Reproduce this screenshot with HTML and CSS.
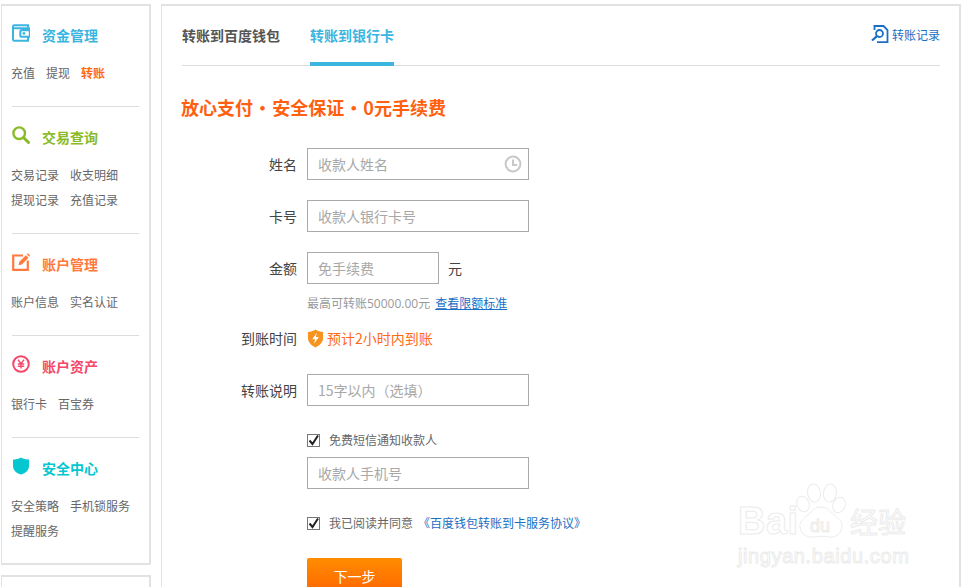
FILE: index.html
```html
<!DOCTYPE html>
<html lang="zh-CN">
<head>
<meta charset="utf-8">
<title>转账到银行卡</title>
<link rel="stylesheet" href="styles.css">
</head>
<body>
<div class="page">
  <aside class="side">
    <div class="side-box">
      <section class="sec sec-first">
        <h3 class="sec-title c-blue">
          <svg class="sec-ico" viewBox="0 0 18 18"><path d="M16 3.500V1.200H2.200A1.200 1.200 0 0 0 1 2.400v13.200c0 .7.5 1.200 1.200 1.200H16v-4" fill="none" stroke="#3bb5e0" stroke-width="2"/><path d="M1 4.200h16.800v8.600H9.500a1.200 1.200 0 0 1-1.200-1.200V7.400c0-.7.5-1.200 1.200-1.200h8.300" fill="none" stroke="#3bb5e0" stroke-width="2"/><rect x="10.600" y="8.200" width="2.600" height="2.400" fill="#3bb5e0"/></svg>
          资金管理</h3>
        <div class="links"><a>充值</a><a>提现</a><a class="on">转账</a></div>
      </section>
      <section class="sec sec-two">
        <h3 class="sec-title c-green">
          <svg class="sec-ico" viewBox="0 0 18 18"><circle cx="7.200" cy="7.200" r="5.800" fill="none" stroke="#8abb2a" stroke-width="2.400"/><path d="M11.500 11.500l5 5" stroke="#8abb2a" stroke-width="3" stroke-linecap="round"/></svg>
          交易查询</h3>
        <div class="links"><a>交易记录</a><a>收支明细</a><a>提现记录</a><a>充值记录</a></div>
      </section>
      <section class="sec">
        <h3 class="sec-title c-orange">
          <svg class="sec-ico" viewBox="0 0 18 18"><path d="M11 2.500H1.200v14.300h14.600V7.500" fill="none" stroke="#ff7a3c" stroke-width="2.200"/><path d="M6.500 12.200l.8-3.400 6.600-6.600 2.600 2.600-6.600 6.600z" fill="#ff7a3c"/><path d="M14.800 1.300l1.100-1 2.300 2.300-1 1.200z" fill="#ff7a3c"/></svg>
          账户管理</h3>
        <div class="links"><a>账户信息</a><a>实名认证</a></div>
      </section>
      <section class="sec">
        <h3 class="sec-title c-red">
          <svg class="sec-ico" viewBox="0 0 18 18"><circle cx="9" cy="9" r="7.800" fill="none" stroke="#f4486a" stroke-width="2"/><path d="M6 4.800L9 8.600l3-3.800M5.800 9h6.400M5.800 11.200h6.400M9 8.600v5" fill="none" stroke="#f4486a" stroke-width="1.400"/></svg>
          账户资产</h3>
        <div class="links"><a>银行卡</a><a>百宝券</a></div>
      </section>
      <section class="sec sec-last">
        <h3 class="sec-title c-teal">
          <svg class="sec-ico" viewBox="0 0 18 18"><path d="M1 2.600C3.600 2.600 6.500 1.800 9 .4c2.500 1.400 5.400 2.200 8 2.200v6.600c0 4-3.600 7-8 8.400-4.400-1.400-8-4.400-8-8.400z" fill="#06c6cf"/></svg>
          安全中心</h3>
        <div class="links"><a>安全策略</a><a>手机锁服务</a><a>提醒服务</a></div>
      </section>
    </div>
    <div class="side-box side-next"></div>
  </aside>

  <main class="main">
    <header class="tabs">
      <a class="tab">转账到百度钱包</a>
      <a class="tab tab-on">转账到银行卡</a>
      <a class="record">
        <svg class="record-ico" viewBox="0 0 18 18"><path d="M3.500 5V1h9l4 4v12.200H6" fill="none" stroke="#1a6fc4" stroke-width="1.800"/><circle cx="8.500" cy="8.500" r="3.500" fill="none" stroke="#1a6fc4" stroke-width="1.800"/><path d="M6 11.200l-5 4.300" stroke="#1a6fc4" stroke-width="2.200"/></svg>
        转账记录</a>
    </header>

    <h2 class="slogan">放心支付 • 安全保证 • 0元手续费</h2>

    <form class="form">
      <div class="row">
        <label class="lab">姓名</label>
        <div class="field">
          <input class="ipt" placeholder="收款人姓名">
          <svg class="clock" viewBox="0 0 18 18"><circle cx="9" cy="9" r="7.400" fill="none" stroke="#c8c8c8" stroke-width="2"/><path d="M9 4.600V10h4.300" fill="none" stroke="#c8c8c8" stroke-width="2"/></svg>
        </div>
      </div>
      <div class="row">
        <label class="lab">卡号</label>
        <input class="ipt" placeholder="收款人银行卡号">
      </div>
      <div class="row row-amount">
        <label class="lab">金额</label>
        <input class="ipt ipt-short" placeholder="免手续费">
        <span class="unit">元</span>
      </div>
      <p class="hint">最高可转账50000.00元<a class="hint-link">查看限额标准</a></p>
      <div class="row row-time">
        <label class="lab">到账时间</label>
        <svg class="bolt" viewBox="0 0 18 20"><path d="M9 .5c2.200 1.600 5 2.400 8 2.500v6.500c0 4.500-3.500 7.800-8 10-4.500-2.200-8-5.500-8-10V3c3-.1 5.800-.9 8-2.500z" fill="#f7931e"/><path d="M10.300 4L5.500 10.800h3l-1 4.800 5-7.200H9.400z" fill="#fff"/></svg>
        <span class="eta">预计2小时内到账</span>
      </div>
      <div class="row row-note">
        <label class="lab">转账说明</label>
        <input class="ipt ipt-note" lang="zh-Hant" placeholder="15字以内（选填）">
      </div>
      <div class="check check-sms">
        <span class="box"><svg viewBox="0 0 13 13"><path d="M2.500 6.500l3 3.500 5.500-8.500" fill="none" stroke="#222" stroke-width="2"/></svg></span>
        免费短信通知收款人
      </div>
      <div class="row row-phone">
        <input class="ipt" placeholder="收款人手机号">
      </div>
      <div class="check check-agree">
        <span class="box"><svg viewBox="0 0 13 13"><path d="M2.500 6.500l3 3.500 5.500-8.500" fill="none" stroke="#222" stroke-width="2"/></svg></span>
        我已阅读并同意<a class="agree-link">《百度钱包转账到卡服务协议》</a>
      </div>
      <button class="next" type="button">下一步</button>
    </form>
  </main>
</div>

<div class="mark">
  <span class="mark-bai">Bai</span>
  <svg class="mark-paw" viewBox="0 0 56 60"><g fill="#fff" stroke="#ececec" stroke-width="1"><ellipse cx="9" cy="21" rx="6" ry="8" transform="rotate(-20 9 21)"/><ellipse cx="20" cy="10" rx="6.500" ry="9" transform="rotate(-8 20 10)"/><ellipse cx="36" cy="10" rx="6.500" ry="9" transform="rotate(8 36 10)"/><ellipse cx="45" cy="22" rx="6" ry="8" transform="rotate(20 45 22)"/><path d="M27 24c6 0 8 3 13 8 5 4 9 7 8 12-1 8-8 11-14 10-4-1-10-1-14 0-6 1-13-2-14-10-1-5 3-8 8-12 5-5 7-8 13-8z"/></g></svg>
  <span class="mark-du">du</span>
  <span class="mark-cn">经验</span>
  <span class="mark-url">jingyan.baidu.com</span>
</div>
</body>
</html>
```

FILE: styles.css
```css
* { box-sizing: border-box; }
html, body { margin: 0; height: 587px; overflow: hidden; background: #fff; }
body { font-family: "Noto Sans CJK SC", "Liberation Sans", sans-serif; font-size: 12px; color: #666; }
a { text-decoration: none; }

.page { display: flex; align-items: flex-start; gap: 10px; padding: 4px 0 0 1px; }

.side { width: 150px; flex: none; display: flex; flex-direction: column; gap: 10px; }
.side-box { border: 2px solid #e2e2e2; border-width: 2px 2px 2px 1px; padding: 0 10px; }
.side-next { height: 60px; }

.sec { height: 102px; padding-top: 18px; border-bottom: 1px solid #ddd; }
.sec-first { height: 101px; padding-top: 17px; }
.sec-two { height: 127px; }
.sec-last { height: 125px; border-bottom: 0; }

.sec-title { display: flex; align-items: center; gap: 12px; height: 24px; margin: 0 0 13px; font-size: 14px; font-weight: 700; line-height: 24px; }
.sec-ico { width: 18px; height: 18px; flex: none; margin-bottom: 4px; }
.c-blue { color: #3bb5e0; }
.c-green { color: #8abb2a; }
.c-orange { color: #ff7a3c; }
.c-red { color: #f4486a; }
.c-teal { color: #06c6cf; }

.links { display: flex; flex-wrap: wrap; column-gap: 11px; margin-left: -1px; line-height: 25px; color: #666; }
.links .on { color: #ff6a13; font-weight: 700; }

.main { width: 800px; flex: none; height: 640px; border: 2px solid #e2e2e2; border-width: 2px 2px 2px 1px; padding: 0 19px 0 20px; }

.tabs { display: flex; align-items: stretch; height: 60px; border-bottom: 1px solid #ddd; gap: 30px; }
.tab { font-size: 14px; font-weight: 700; line-height: 58px; color: #555; height: 60px; }
.tab-on { color: #3bb5e0; border-bottom: 4px solid #3bb5e0; }
.record { margin-left: auto; display: flex; align-items: center; gap: 3px; color: #1a6fc4; font-size: 12px; height: 56px; }
.record-ico { width: 18px; height: 18px; }

.slogan { margin: 25px 0 0 -1px; font-size: 18px; font-weight: 700; line-height: 32px; color: #ff5f0f; word-spacing: -3.5px; }

.form { margin-top: 25px; }
.row { display: flex; align-items: center; height: 32px; margin-bottom: 20px; }
.lab { width: 115px; margin-right: 10px; text-align: right; font-size: 14px; color: #444; flex: none; }
.field { position: relative; }
.ipt { display: block; width: 222px; height: 32px; border: 1px solid #aaa; padding: 0 10px; font: 14px "Noto Sans CJK SC", "Liberation Sans", sans-serif; color: #333; outline: 0; background: #fff; border-radius: 0; }
.ipt::placeholder { color: #a8a8a8; opacity: 1; }
.ipt-short { width: 132px; }
.ipt-note { font-family: "Noto Sans CJK TC", "Noto Sans CJK SC", sans-serif; text-spacing-trim: space-all; }
.clock { position: absolute; right: 7px; top: 7px; width: 18px; height: 18px; }
.unit { margin-left: 9px; font-size: 14px; color: #444; }

.row-amount { margin-bottom: 9px; }
.hint { margin: 0 0 0 125px; height: 21px; padding-top: 1px; line-height: 20px; font-family: "Open Sans", "Noto Sans CJK SC", sans-serif; font-size: 12px; color: #999; }
.hint-link { margin-left: 5px; color: #1a6fc4; text-decoration: underline; }
.row-time { margin: 8px 0 20px; height: 32px; }
.bolt { width: 17px; height: 19px; margin-right: 3px; flex: none; }
.eta { font-size: 14px; color: #ff6a13; }
.row-note { margin-bottom: 24px; }

.check { display: flex; align-items: center; height: 20px; padding-bottom: 2px; margin-left: 125px; font-size: 12px; color: #666; }
.box { width: 13px; height: 13px; border: 1px solid #777; margin: 2px 9px 0 0; flex: none; display: block; }
.box svg { display: block; width: 13px; height: 13px; margin: -1px 0 0 -1px; }
.row-phone { margin: 7px 0 24px 125px; }
.agree-link { color: #1a6fc4; margin-left: 5px; }
.check-agree { margin-bottom: 25px; }

.next { display: block; margin-left: 125px; width: 95px; height: 36px; border: 0; border-radius: 2px; background: linear-gradient(#ff8c00, #ff6600); color: #fff; font: 14px "Noto Sans CJK SC", sans-serif; padding: 0; }

.mark { position: absolute; left: 738px; top: 483px; width: 172px; height: 84px; }
.mark span { position: absolute; color: #fff; -webkit-text-stroke: 1px #ececec; font-family: "Liberation Sans", "Noto Sans CJK SC", sans-serif; white-space: nowrap; }
.mark-bai { left: 0; top: 16px; font-size: 38px; font-weight: 700; line-height: 44px; letter-spacing: .5px; }
.mark-paw { position: absolute; left: 56px; top: 0; width: 56px; height: 60px; }
.mark-du { left: 72px; top: 32px; font-size: 18px; line-height: 22px; }
.mark-cn { left: 112px; top: 24px; font-size: 28px; line-height: 34px; }
.mark .mark-url { left: 0; top: 61px; font-size: 20px; line-height: 24px; letter-spacing: .6px; }
```
